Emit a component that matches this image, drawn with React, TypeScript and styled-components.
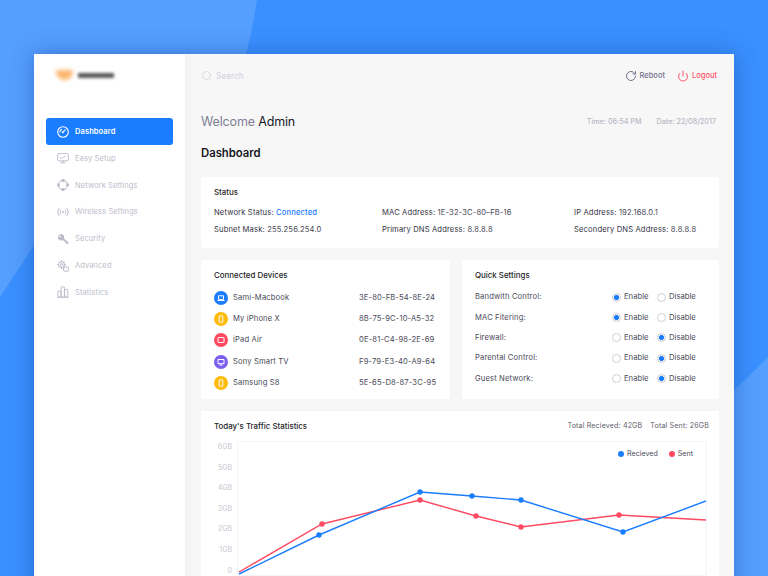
import React from "react";
import styled, { createGlobalStyle } from "styled-components";
import { Search, RotateCw, Power } from "lucide-react";

const Global = createGlobalStyle`
  html, body { margin: 0; padding: 0; }
  body { width: 768px; height: 576px; overflow: hidden; font-family: Inter, "Noto Sans", sans-serif; -webkit-font-smoothing: antialiased; }
`;

const Page = styled.div`
  position: relative;
  width: 768px;
  height: 576px;
  overflow: hidden;
  box-sizing: border-box;
  padding: 54px 34px 0;
  background: #3a90ff;
  &::before {
    content: "";
    position: absolute;
    inset: 0;
    background: #559fff;
    clip-path: path("M0 0H257C253 25 250 40 246 54C200 130 90 170 33 247L0 297Z");
  }
  &::after {
    content: "";
    position: absolute;
    inset: 0;
    background: #559fff;
    clip-path: path("M768 357C755 370 745 380 734 390L600 480L560 576H768Z");
  }
`;

const Window = styled.div`
  position: relative;
  z-index: 1;
  display: grid;
  grid-template-columns: 151px 549px;
  width: 700px;
  height: 560px;
  box-shadow: 0 0 22px rgba(20, 60, 140, .42);
`;

const Sidebar = styled.aside`
  background: #fff;
  padding: 14px 12px 0;
  box-shadow: 2px 0 8px rgba(0, 0, 0, .04);
  z-index: 1;
`;

const Logo = styled.div`
  display: flex;
  align-items: center;
  height: 14px;
  margin: 0 0 36px 10px;
`;
const LogoMark = styled.span`
  width: 17px;
  height: 10px;
  border-radius: 2px 2px 10px 10px;
  background: #fdb56e;
  filter: blur(2px);
`;
const LogoWord = styled.span`
  width: 36px;
  height: 5px;
  margin-left: 5px;
  background: #5a5a5a;
  filter: blur(1.5px);
`;

const Nav = styled.nav`
  display: flex;
  flex-direction: column;
`;
const NavItem = styled.div<{ $active?: boolean }>`
  display: flex;
  align-items: center;
  gap: 6px;
  height: ${(p) => (p.$active ? "27px" : "26.8px")};
  padding-left: 11px;
  box-sizing: border-box;
  border-radius: 3px;
  background: ${(p) => (p.$active ? "#1a7cff" : "transparent")};
  color: ${(p) => (p.$active ? "#fff" : "#bcbcca")};
  font-size: 7.5px;
  font-weight: ${(p) => (p.$active ? 600 : 400)};
  letter-spacing: .1px;
  svg { flex: none; width: 12px; height: 12px; }
`;

const Main = styled.main`
  background: #f7f7f8;
  padding: 0 15px 0 16px;
`;
const Top = styled.header`
  display: flex;
  align-items: center;
  height: 43px;
`;
const SearchBox = styled.div`
  display: flex;
  align-items: center;
  gap: 3px;
  flex: 1;
  color: #d2d2da;
  font-size: 8.3px;
`;
const TopAction = styled.div<{ $danger?: boolean }>`
  display: flex;
  align-items: center;
  gap: 3px;
  margin-left: ${(p) => (p.$danger ? "12px" : "0")};
  margin-right: ${(p) => (p.$danger ? "2px" : "0")};
  color: ${(p) => (p.$danger ? "#ff5468" : "#73738a")};
  font-size: 7.5px;
  font-weight: 500;
`;
const Welcome = styled.div`
  display: flex;
  align-items: center;
  height: 48px;
`;
const Greeting = styled.h2`
  flex: 1;
  margin: 0;
  font-size: 12.5px;
  letter-spacing: -.15px;
  font-weight: 400;
  color: #7f7f96;
  span { color: #17171f; }
`;
const Stamp = styled.span`
  margin-left: 12px;
  margin-right: 3px;
  font-size: 7.2px;
  font-weight: 500;
  color: #b8b8c4;
`;
const Heading = styled.h1`
  margin: 0 0 16px;
  font-size: 11.3px;
  line-height: 16px;
  font-weight: 600;
  color: #15151c;
`;
const Card = styled.section`
  background: #fff;
  border-radius: 2px;
  box-sizing: border-box;
  box-shadow: 0 0 6px rgba(0, 0, 0, .015);
`;
const CardTitle = styled.h3`
  margin: 0;
  font-size: 7.9px;
  line-height: 12px;
  font-weight: 500;
  color: #1d1d26;
`;
const StatusCard = styled(Card)`
  height: 71px;
  padding: 9px 13px;
`;
const StatusGrid = styled.div`
  display: grid;
  grid-template-columns: 168px 192px auto;
  row-gap: 6.5px;
  margin-top: 10px;
`;
const Text = styled.div`
  font-size: 7.6px;
  line-height: 10px;
  color: #4a4a58;
  letter-spacing: .15px;
  white-space: nowrap;
  b { font-weight: 400; color: #33333f; }
  a { color: #1a7cff; font-weight: 500; }
`;
const Columns = styled.div`
  display: grid;
  grid-template-columns: 249px 257px;
  gap: 12px;
  margin: 12px 0;
`;
const ListCard = styled(Card)`
  height: 139px;
  padding: 9px 13px;
`;
const Rows = styled.div`
  display: flex;
  flex-direction: column;
  margin-top: 6px;
`;
const Row = styled.div<{ $h: number }>`
  display: flex;
  align-items: center;
  height: ${(p) => p.$h}px;
`;
const DeviceDot = styled.span<{ $c: string }>`
  display: flex;
  align-items: center;
  justify-content: center;
  width: 14px;
  height: 14px;
  margin-right: 5px;
  border-radius: 50%;
  background: ${(p) => p.$c};
`;
const Name = styled(Text)`
  flex: 1;
`;
const Mac = styled(Text)`
  width: 78px;
`;
const SettingOptions = styled.div`
  display: flex;
  margin-right: 4px;
`;
const RadioLabel = styled.label`
  display: flex;
  align-items: center;
  gap: 3px;
  width: 45px;
  font-size: 7.7px;
  line-height: 10px;
  color: #4a4a58;
`;
const RadioDot = styled.span<{ $on?: boolean }>`
  display: inline-block;
  box-sizing: border-box;
  width: 9px;
  height: 9px;
  border-radius: 50%;
  border: 1px solid #cfcfd6;
  background: ${(p) => (p.$on ? "radial-gradient(circle, #1a7cff 0 2.2px, #eef0f4 2.7px)" : "#fff")};
`;
const TrafficCard = styled(Card)`
  height: 180px;
  padding: 9px 10px 0 13px;
`;
const TrafficHead = styled.div`
  display: flex;
  align-items: center;
  justify-content: space-between;
`;
const Totals = styled(Text)`
  display: flex;
  gap: 8px;
  font-size: 7.1px;
  color: #5d5d6a;
`;
const Chart = styled.div`
  display: flex;
  margin-top: 9px;
`;
const YAxis = styled.div`
  display: flex;
  flex-direction: column;
  width: 18px;
  margin-right: 5px;
  padding-top: 1px;
`;
const YLabel = styled.span`
  height: 20.6px;
  text-align: right;
  font-size: 7px;
  line-height: 10px;
  color: #c6c6d0;
`;
const Plot = styled.div`
  position: relative;
  width: 468px;
  height: 133px;
  border: 1px solid #f0f4fc;
  box-sizing: content-box;
`;
const Legend = styled.div`
  position: absolute;
  top: 7px;
  right: 13px;
  display: flex;
  gap: 11px;
  font-size: 7.1px;
  line-height: 10px;
  color: #4a4a58;
`;
const LegendItem = styled.span<{ $c: string }>`
  display: flex;
  align-items: center;
  gap: 3px;
  &::before {
    content: "";
    width: 6px;
    height: 6px;
    border-radius: 50%;
    background: ${(p) => p.$c};
  }
`;

const G = { fill: "none", stroke: "currentColor", strokeWidth: 1.1, strokeLinecap: "round", strokeLinejoin: "round" } as const;

const GaugeIcon = () => (
  <svg viewBox="0 0 12 12" {...G} strokeWidth={1.1}>
    <circle cx="6" cy="6" r="5.3" />
    <circle cx="5.6" cy="6.4" r=".9" fill="currentColor" stroke="none" />
    <path d="M5.6 6.4 8.2 3.8M2.9 6a3.1 3.1 0 0 1 1.6-2.6" />
  </svg>
);
const MonitorIcon = () => (
  <svg viewBox="0 0 12 12" {...G} strokeWidth={0.9}>
    <rect x=".6" y="1.6" width="10.8" height="7.2" rx=".8" />
    <path d="M6 8.8v2M3.8 10.8h4.4M3.2 5.6l1.6 1 3.4-2.6" />
  </svg>
);
const NetworkIcon = () => (
  <svg viewBox="0 0 12 12" {...G}>
    <circle cx="6" cy="6" r="4.6" strokeDasharray="2.2 1.4" />
    <circle cx="6" cy="1.4" r="1" fill="currentColor" />
    <circle cx="6" cy="10.6" r="1" fill="currentColor" />
    <circle cx="1.4" cy="6" r="1" fill="currentColor" />
    <circle cx="10.6" cy="6" r="1" fill="currentColor" />
  </svg>
);
const WirelessIcon = () => (
  <svg viewBox="0 0 12 12" {...G} strokeWidth={1}>
    <circle cx="6" cy="6" r="1" fill="currentColor" stroke="none" />
    <path d="M3.9 3.8a3 3 0 0 0 0 4.4M8.1 3.8a3 3 0 0 1 0 4.4M2 2.4a5.4 5.4 0 0 0 0 7.2M10 2.4a5.4 5.4 0 0 1 0 7.2" />
  </svg>
);
const KeyIcon = () => (
  <svg viewBox="0 0 12 12">
    <path fill="currentColor" d="M4.3 1a3.3 3.3 0 0 0-1.1 6.4 3.3 3.3 0 0 0 2.9-.5l3.8 4.1h1.4V8.9l-.9-.1-.1-1-1-.1-2.3-2.2a3.3 3.3 0 0 0-2.7-4.5zM3.2 2.4a.9.9 0 1 1 0 1.8.9.9 0 0 1 0-1.8z" />
  </svg>
);
const GearIcon = () => (
  <svg viewBox="0 0 12 12" {...G} strokeWidth={1}>
    <path d="M4.6.6v1.2M4.6 7.4v1.2M.6 4.6h1.2M7.4 4.6h1.2M1.8 1.8l.9.9M6.5 6.5l.9.9M7.4 1.8l-.9.9M2.7 6.5l-.9.9" />
    <circle cx="4.6" cy="4.6" r="3" />
    <circle cx="4.6" cy="4.6" r="1.1" />
    <rect x="6.6" y="7" width="4.8" height="4.2" rx=".5" fill="#fff" />
  </svg>
);
const BarsIcon = () => (
  <svg viewBox="0 0 12 12" {...G} strokeWidth={0.9}>
    <path d="M.8 11.2h10.4" />
    <rect x="1.2" y="5" width="2.6" height="6.2" />
    <rect x="4.6" y="1" width="2.8" height="10.2" />
    <rect x="8.2" y="3.4" width="2.6" height="7.8" />
  </svg>
);

const DeviceGlyph = ({ kind }: { kind: string }) => (
  <svg width="8" height="8" viewBox="0 0 8 8" fill="none" stroke="#fff" strokeWidth="1">
    {kind === "laptop" && <path d="M1.5 1.8h5v3.6h-5zM.4 6.5h7.2" />}
    {kind === "phone" && <rect x="2.2" y=".8" width="3.6" height="6.4" rx=".5" />}
    {kind === "tablet" && <rect x="1" y="1.5" width="6" height="5" rx=".5" />}
    {kind === "tv" && <path d="M1 1.5h6v4.2H1zM2.4 7h3.2" />}
  </svg>
);

const nav = [
  { label: "Dashboard", Icon: GaugeIcon, active: true },
  { label: "Easy Setup", Icon: MonitorIcon },
  { label: "Network Settings", Icon: NetworkIcon },
  { label: "Wireless Settings", Icon: WirelessIcon },
  { label: "Security", Icon: KeyIcon },
  { label: "Advanced", Icon: GearIcon },
  { label: "Statistics", Icon: BarsIcon },
];
const status = [
  ["Network Status:", "Connected"],
  ["MAC Address:", "1E-32-3C-80–FB-16"],
  ["IP Address:", "192.168.0.1"],
  ["Subnet Mask:", "255.256.254.0"],
  ["Primary DNS Address:", "8.8.8.8"],
  ["Secondery DNS Address:", "8.8.8.8"],
];
const devices = [
  ["Sami-Macbook", "3E-80-FB-54-8E-24", "#1a7cff", "laptop"],
  ["My iPhone X", "8B-75-9C-10-A5-32", "#ffbb0a", "phone"],
  ["iPad Air", "0E-81-C4-98-2E-69", "#ff4a62", "tablet"],
  ["Sony Smart TV", "F9-79-E3-40-A9-64", "#7d5ff0", "tv"],
  ["Samsung S8", "5E-65-D8-87-3C-95", "#ffbb0a", "phone"],
];
const settings: [string, boolean][] = [
  ["Bandwith Control:", true],
  ["MAC Fitering:", true],
  ["Firewall:", false],
  ["Parental Control:", false],
  ["Guest Network:", false],
];
const blue = [[1, 132], [81, 93], [182, 50], [234, 54], [283, 58], [385, 90], [468, 59]];
const red = [[1, 130], [84, 82], [182, 58], [238, 74], [283, 85], [381, 73], [468, 78]];
const pts = (a: number[][]) => a.map((p) => p.join(",")).join(" ");

export default function App() {
  return (
    <Page>
      <Global />
      <Window>
        <Sidebar>
          <Logo>
            <LogoMark />
            <LogoWord />
          </Logo>
          <Nav>
            {nav.map(({ label, Icon, active }) => (
              <NavItem key={label} $active={active}>
                <Icon />
                {label}
              </NavItem>
            ))}
          </Nav>
        </Sidebar>
        <Main>
          <Top>
            <SearchBox>
              <Search size={12} strokeWidth={1.5} />
              Search
            </SearchBox>
            <TopAction>
              <RotateCw size={12} strokeWidth={2} />
              Reboot
            </TopAction>
            <TopAction $danger>
              <Power size={12} strokeWidth={2} />
              Logout
            </TopAction>
          </Top>
          <Welcome>
            <Greeting>
              Welcome <span>Admin</span>
            </Greeting>
            <Stamp>Time: 06:54 PM</Stamp>
            <Stamp>Date: 22/08/2017</Stamp>
          </Welcome>
          <Heading>Dashboard</Heading>
          <StatusCard>
            <CardTitle>Status</CardTitle>
            <StatusGrid>
              {status.map(([k, v]) => (
                <Text key={k}>
                  <b>{k}</b> {v === "Connected" ? <a>{v}</a> : v}
                </Text>
              ))}
            </StatusGrid>
          </StatusCard>
          <Columns>
            <ListCard>
              <CardTitle>Connected Devices</CardTitle>
              <Rows>
                {devices.map(([n, m, c, k]) => (
                  <Row key={n} $h={21.3}>
                    <DeviceDot $c={c}>
                      <DeviceGlyph kind={k} />
                    </DeviceDot>
                    <Name>{n}</Name>
                    <Mac>{m}</Mac>
                  </Row>
                ))}
              </Rows>
            </ListCard>
            <ListCard>
              <CardTitle>Quick Settings</CardTitle>
              <Rows>
                {settings.map(([n, on]) => (
                  <Row key={n} $h={20.4}>
                    <Name>{n}</Name>
                    <SettingOptions>
                      <RadioLabel>
                        <RadioDot $on={on} />
                        Enable
                      </RadioLabel>
                      <RadioLabel>
                        <RadioDot $on={!on} />
                        Disable
                      </RadioLabel>
                    </SettingOptions>
                  </Row>
                ))}
              </Rows>
            </ListCard>
          </Columns>
          <TrafficCard>
            <TrafficHead>
              <CardTitle>Today's Traffic Statistics</CardTitle>
              <Totals>
                <span>Total Recieved: 42GB</span>
                <span>Total Sent: 26GB</span>
              </Totals>
            </TrafficHead>
            <Chart>
              <YAxis>
                {["6GB", "5GB", "4GB", "3GB", "2GB", "1GB", "0"].map((l) => (
                  <YLabel key={l}>{l}</YLabel>
                ))}
              </YAxis>
              <Plot>
                <svg width="468" height="133" viewBox="0 0 468 133">
                  <polyline points={pts(red)} fill="none" stroke="#ff4a62" strokeWidth="1.4" />
                  <polyline points={pts(blue)} fill="none" stroke="#1a7cff" strokeWidth="1.4" />
                  {red.slice(1, -1).map(([x, y]) => (
                    <circle key={x} cx={x} cy={y} r="2.7" fill="#ff4a62" />
                  ))}
                  {blue.slice(1, -1).map(([x, y]) => (
                    <circle key={x} cx={x} cy={y} r="2.7" fill="#1a7cff" />
                  ))}
                </svg>
                <Legend>
                  <LegendItem $c="#1a7cff">Recieved</LegendItem>
                  <LegendItem $c="#ff4a62">Sent</LegendItem>
                </Legend>
              </Plot>
            </Chart>
          </TrafficCard>
        </Main>
      </Window>
    </Page>
  );
}
